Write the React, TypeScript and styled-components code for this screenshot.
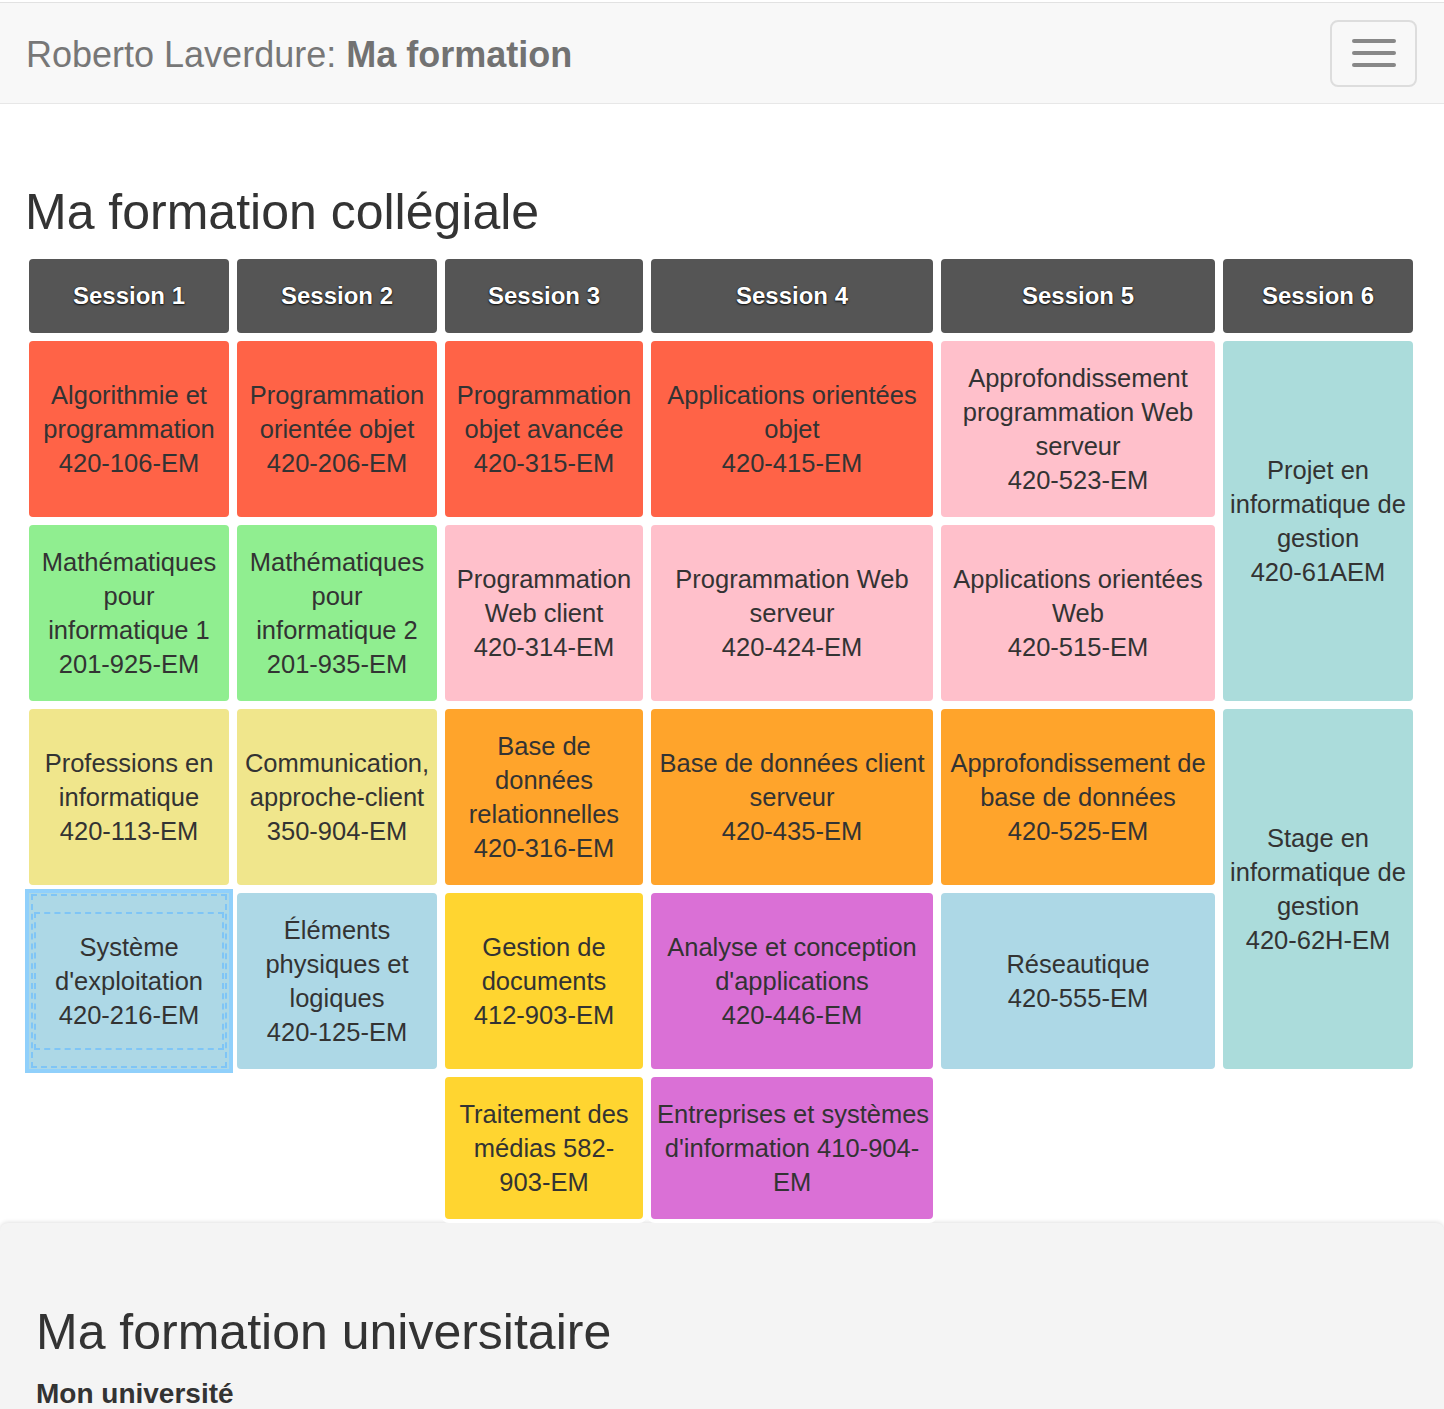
import * as React from 'react'

import styled, { createGlobalStyle } from 'styled-components'

type Tone = 'red' | 'green' | 'khaki' | 'pink' | 'orange' | 'gold' | 'orchid' | 'blue' | 'teal'

interface ICourse {
  tone: Tone
  lines: string[]
  rowSpan?: number
  selected?: boolean
}

const tones: Record<Tone, string> = {
  red: '#ff6347',
  green: '#90ee90',
  khaki: '#f0e68c',
  pink: '#ffc0cb',
  orange: '#ffa42b',
  gold: '#ffd530',
  orchid: '#da70d6',
  blue: '#add8e6',
  teal: '#abdcdb',
}

const sessions = ['Session 1', 'Session 2', 'Session 3', 'Session 4', 'Session 5', 'Session 6']
const colWidths = [208, 208, 206, 290, 282, 198]

const rows: (ICourse | null)[][] = [
  [
    { tone: 'red', lines: ['Algorithmie et', 'programmation', '420-106-EM'] },
    { tone: 'red', lines: ['Programmation', 'orientée objet', '420-206-EM'] },
    { tone: 'red', lines: ['Programmation', 'objet avancée', '420-315-EM'] },
    { tone: 'red', lines: ['Applications orientées', 'objet', '420-415-EM'] },
    { tone: 'pink', lines: ['Approfondissement', 'programmation Web', 'serveur', '420-523-EM'] },
    { tone: 'teal', rowSpan: 2, lines: ['Projet en', 'informatique de', 'gestion', '420-61AEM'] },
  ],
  [
    { tone: 'green', lines: ['Mathématiques', 'pour', 'informatique 1', '201-925-EM'] },
    { tone: 'green', lines: ['Mathématiques', 'pour', 'informatique 2', '201-935-EM'] },
    { tone: 'pink', lines: ['Programmation', 'Web client', '420-314-EM'] },
    { tone: 'pink', lines: ['Programmation Web', 'serveur', '420-424-EM'] },
    { tone: 'pink', lines: ['Applications orientées', 'Web', '420-515-EM'] },
  ],
  [
    { tone: 'khaki', lines: ['Professions en', 'informatique', '420-113-EM'] },
    { tone: 'khaki', lines: ['Communication,', 'approche-client', '350-904-EM'] },
    { tone: 'orange', lines: ['Base de', 'données', 'relationnelles', '420-316-EM'] },
    { tone: 'orange', lines: ['Base de données client', 'serveur', '420-435-EM'] },
    { tone: 'orange', lines: ['Approfondissement de', 'base de données', '420-525-EM'] },
    { tone: 'teal', rowSpan: 2, lines: ['Stage en', 'informatique de', 'gestion', '420-62H-EM'] },
  ],
  [
    { tone: 'blue', selected: true, lines: ['Système', "d'exploitation", '420-216-EM'] },
    { tone: 'blue', lines: ['Éléments', 'physiques et', 'logiques', '420-125-EM'] },
    { tone: 'gold', lines: ['Gestion de', 'documents', '412-903-EM'] },
    { tone: 'orchid', lines: ['Analyse et conception', "d'applications", '420-446-EM'] },
    { tone: 'blue', lines: ['Réseautique', '420-555-EM'] },
  ],
  [
    null,
    null,
    { tone: 'gold', lines: ['Traitement des', 'médias 582-', '903-EM'] },
    { tone: 'orchid', lines: ['Entreprises et systèmes', "d'information 410-904-", 'EM'] },
  ],
]

const GlobalStyle = createGlobalStyle`
  body {
    margin: 0;
    background: #fff;
    color: #333;
    font-family: "Liberation Sans", Helvetica, Arial, sans-serif;
  }
`

const Navbar = styled.nav`
  display: flex;
  align-items: center;
  justify-content: space-between;
  height: 100px;
  margin-top: 2px;
  padding: 0 27px 0 26px;
  background: #f8f8f8;
  border-top: 1px solid #e2e2e2;
  border-bottom: 1px solid #e7e7e7;
`

const Brand = styled.a`
  padding-top: 4px;
  font-size: 36px;
  color: #777;
  text-decoration: none;

  strong {
    font-weight: bold;
    color: #727272;
  }
`

const Toggle = styled.button`
  display: flex;
  flex-direction: column;
  justify-content: center;
  align-items: center;
  gap: 8px;
  width: 87px;
  height: 67px;
  padding: 0;
  background: transparent;
  border: 2px solid #ddd;
  border-radius: 8px;
`

const Bar = styled.span`
  display: block;
  width: 44px;
  height: 4px;
  border-radius: 2px;
  background: #888;
`

const Main = styled.main`
  padding: 0 27px 0 25px;
`

const H2 = styled.h2`
  margin: 81px 0 15px;
  font-size: 50px;
  font-weight: normal;
  line-height: 55px;
  color: #333;
`

const Table = styled.table`
  width: 1392px;
  table-layout: fixed;
  border-collapse: separate;
  border-spacing: 0;
`

const Th = styled.th`
  height: 74px;
  padding: 0;
  background: #555;
  border: 4px solid #fff;
  border-radius: 8px;
  color: #fff;
  font-size: 24px;
  font-weight: bold;
  text-shadow: 0 1px 2px rgba(0, 0, 0, 0.85), 0 0 1px #000;
`

const Td = styled.td<{ $tone?: string; $selected?: boolean }>`
  position: relative;
  padding: 20px 6px;
  background: ${(p) => p.$tone || 'transparent'};
  border: 4px solid ${(p) => (p.$selected ? '#90d0fb' : p.$tone ? '#fff' : 'transparent')};
  border-radius: ${(p) => (p.$selected ? '0' : '8px')};
  font-size: 25.5px;
  line-height: 34px;
  text-align: center;
  vertical-align: middle;
  color: #333;
`

const Line = styled.span`
  display: block;
  white-space: nowrap;
`

const Guide = styled.span<{ $x: number; $y: number }>`
  position: absolute;
  top: ${(p) => p.$y}px;
  bottom: ${(p) => p.$y}px;
  left: ${(p) => p.$x}px;
  right: ${(p) => p.$x}px;
  border: 2px dashed #7fc5f6;
  pointer-events: none;
`

const University = styled.section`
  padding: 1px 36px 0;
  min-height: 200px;
  background: #f4f4f4;
  border-radius: 8px 8px 0 0;
  box-shadow: 0 -1px 4px rgba(0, 0, 0, 0.12);
`

const H2Alt = styled(H2)`
  margin: 81px 0 18px;
`

const H4 = styled.h4`
  margin: 0;
  font-size: 28px;
  font-weight: bold;
  line-height: 31px;
  color: #333;
`

const Course = ({ course }: { course: ICourse | null }) => {
  if (!course) return <Td />
  return (
    <Td $tone={tones[course.tone]} $selected={course.selected} rowSpan={course.rowSpan}>
      {course.selected && (
        <>
          <Guide $x={2} $y={1} />
          <Guide $x={5} $y={19} />
        </>
      )}
      {course.lines.map((l) => (
        <Line key={l}>{l}</Line>
      ))}
    </Td>
  )
}

const App = () => {
  return (
    <>
      <GlobalStyle />
      <Navbar>
        <Brand href="#">
          Roberto Laverdure: <strong>Ma formation</strong>
        </Brand>
        <Toggle aria-label="menu">
          <Bar />
          <Bar />
          <Bar />
        </Toggle>
      </Navbar>
      <Main>
        <H2>Ma formation collégiale</H2>
        <Table>
          <colgroup>
            {colWidths.map((w, i) => (
              <col key={i} style={{ width: w }} />
            ))}
          </colgroup>
          <thead>
            <tr>
              {sessions.map((s) => (
                <Th key={s}>{s}</Th>
              ))}
            </tr>
          </thead>
          <tbody>
            {rows.map((row, i) => (
              <tr key={i}>
                {row.map((c, j) => (
                  <Course key={j} course={c} />
                ))}
              </tr>
            ))}
          </tbody>
        </Table>
      </Main>
      <University>
        <H2Alt>Ma formation universitaire</H2Alt>
        <H4>Mon université</H4>
      </University>
    </>
  )
}

export default App
